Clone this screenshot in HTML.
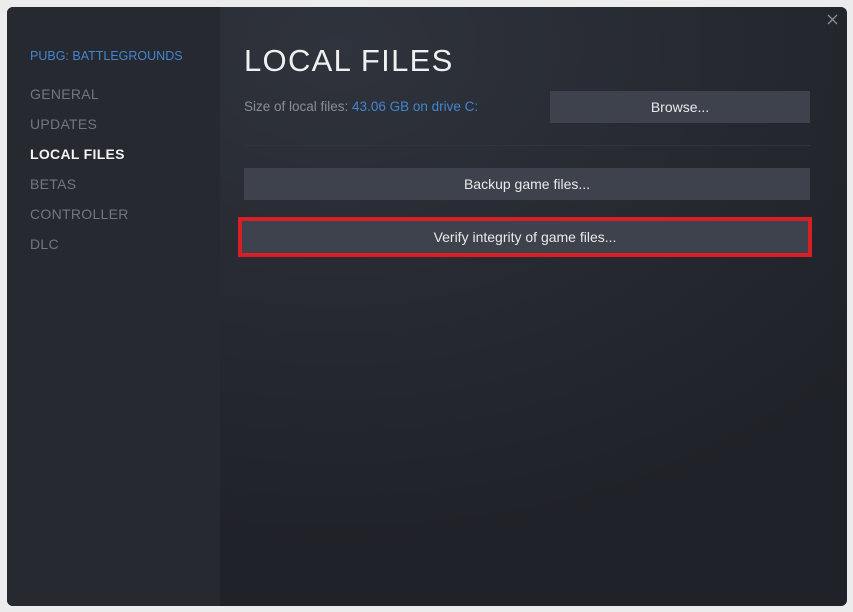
<!DOCTYPE html>
<html><head><style>
body{margin:0;width:853px;height:612px;background:#ececec;font-family:"Liberation Sans",sans-serif;overflow:hidden;position:relative}
.win{position:absolute;left:7px;top:7px;width:840px;height:599px;border-radius:6px;overflow:hidden;background:radial-gradient(ellipse 700px 500px at 330px 40px,#2f333c 0%,#262930 55%,#1f2228 100%)}
.side{position:absolute;left:0;top:0;width:213px;height:100%;background:#262930}
.side div{position:absolute;left:23px;font-size:14px;color:#72767f;letter-spacing:.3px}
.t{color:#4585cf!important;font-size:12.5px!important;letter-spacing:0!important}
.sel{color:#f2f2f2!important;font-weight:bold}
.h{position:absolute;left:237px;top:36px;font-size:31px;color:#f0f0f0;letter-spacing:1.3px}
.sz{position:absolute;left:237px;top:92px;font-size:13.5px;color:#8a8e96}
.sz span{color:#4585cf}
.btn{position:absolute;background:#3d424c;color:#eaeaea;font-size:14px;text-align:center}
.line{position:absolute;left:237px;top:138px;width:566px;height:1px;background:#30343b}
.red{position:absolute;left:231px;top:210px;width:566px;height:32px;border:4px solid #d91f26}
.x{position:absolute;left:820px;top:7px}
</style></head><body>
<div class="win">
<div class="side">
<div class="t" style="top:42px">PUBG: BATTLEGROUNDS</div>
<div style="top:79px">GENERAL</div>
<div style="top:109px">UPDATES</div>
<div class="sel" style="top:139px">LOCAL FILES</div>
<div style="top:169px">BETAS</div>
<div style="top:199px">CONTROLLER</div>
<div style="top:229px">DLC</div>
</div>
<div class="h">LOCAL FILES</div>
<div class="sz">Size of local files: <span>43.06 GB on drive C:</span></div>
<div class="btn" style="left:543px;top:84px;width:260px;height:32px;line-height:32px">Browse...</div>
<div class="line"></div>
<div class="btn" style="left:237px;top:161px;width:566px;height:32px;line-height:32px">Backup game files...</div>
<div class="red"></div>
<div class="btn" style="left:235px;top:214px;width:566px;height:32px;line-height:32px">Verify integrity of game files...</div>
<svg class="x" width="11" height="11" viewBox="0 0 11 11"><path d="M1 1L10 10M10 1L1 10" stroke="#8b8f96" stroke-width="1.3"/></svg>
</div>
</body></html>
